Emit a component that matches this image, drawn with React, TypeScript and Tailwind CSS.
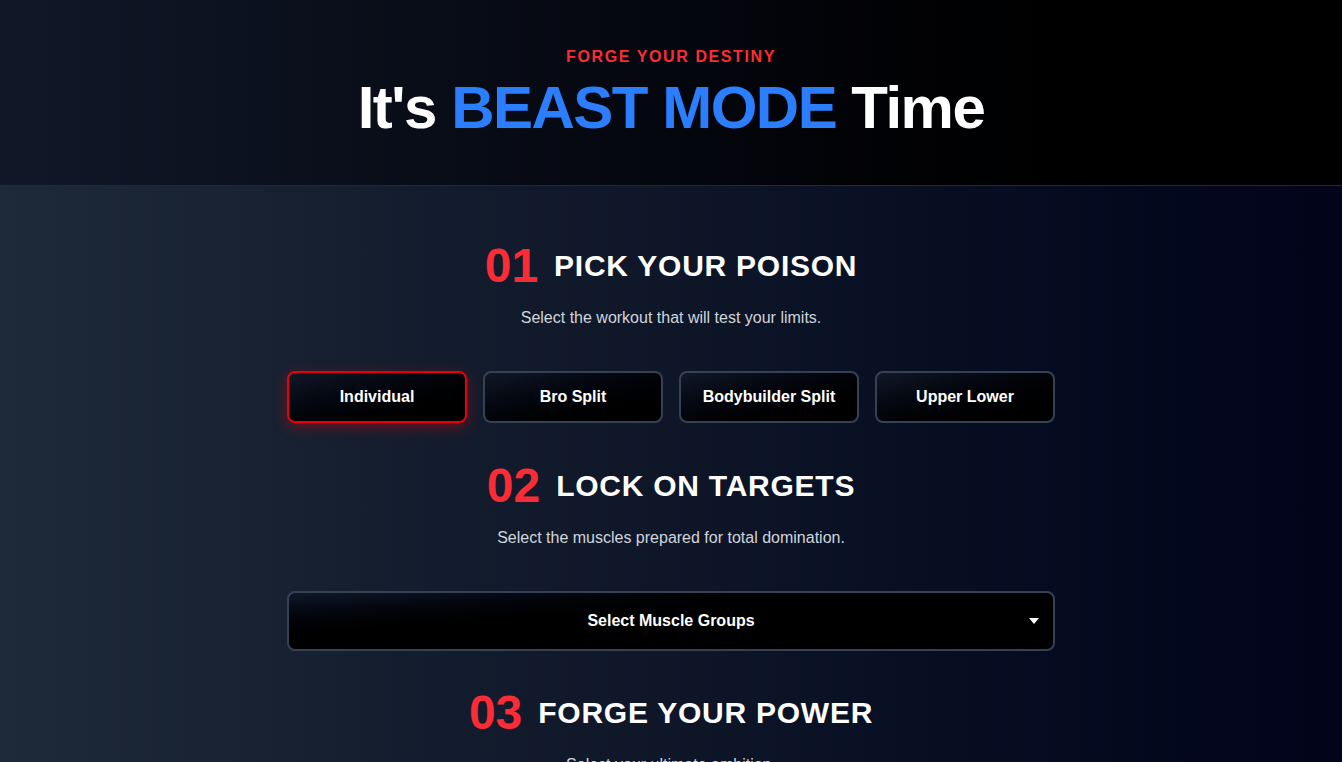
import React, { useState } from "react";

const font = { fontFamily: '"Liberation Sans", Arial, sans-serif' };

function SectionHeading({ num, title, sub }: { num: string; title: string; sub: string }) {
  return (
    <div className="flex flex-col items-center">
      <div className="flex items-center gap-4 h-12">
        <span className="text-[48px] leading-none font-bold text-red-500">{num}</span>
        <span className="text-[30px] leading-none font-bold text-white tracking-wide">{title}</span>
      </div>
      <p className="mt-[16px] text-base leading-6 text-gray-300">{sub}</p>
    </div>
  );
}

export default function App() {
  const [sel, setSel] = useState("Individual");
  const opts = ["Individual", "Bro Split", "Bodybuilder Split", "Upper Lower"];
  return (
    <div style={font} className="min-h-screen bg-black">
      <header className="h-[186px] bg-gradient-to-r from-gray-900 via-[#05070f] to-black border-b border-slate-800 flex flex-col items-center pt-[48px]">
        <div className="text-base font-bold tracking-[0.1em] text-red-500 leading-[18px]">FORGE YOUR DESTINY</div>
        <h1 className="mt-[6px] text-[60px] leading-[72px] font-bold text-white tracking-[-0.025em]">
          It's <span className="text-blue-500">BEAST MODE</span> Time
        </h1>
      </header>
      <main className="bg-gradient-to-r from-gray-800 via-[#0e1628] to-[#02041a] pt-[56px] pb-10 flex flex-col items-center">
        <div className="w-[768px] flex flex-col">
          <SectionHeading num="01" title="PICK YOUR POISON" sub="Select the workout that will test your limits." />
          <div className="mt-[41px] grid grid-cols-4 gap-4">
            {opts.map((o) => (
              <button
                key={o}
                onClick={() => setSel(o)}
                className={
                  "h-[52px] rounded-lg border-2 bg-gradient-to-br from-gray-900 to-black text-white font-bold text-base " +
                  (sel === o ? "border-red-600 shadow-[0_4px_14px_rgba(220,0,10,0.45)]" : "border-gray-700")
                }
              >
                {o}
              </button>
            ))}
          </div>
          <div className="mt-[39px]">
            <SectionHeading num="02" title="LOCK ON TARGETS" sub="Select the muscles prepared for total domination." />
          </div>
          <div className="mt-[41px] relative h-[60px] rounded-lg border-2 border-gray-700 bg-gradient-to-br from-gray-900 via-black to-black flex items-center justify-center">
            <span className="text-white font-bold text-base">Select Muscle Groups</span>
            <svg className="absolute right-[14px] top-1/2 -translate-y-1/2" width="10" height="6" viewBox="0 0 10 6">
              <path d="M0 0 L10 0 L5 6 Z" fill="white" />
            </svg>
          </div>
          <div className="mt-[38px]">
            <SectionHeading num="03" title="FORGE YOUR POWER" sub="Select your ultimate ambition." />
          </div>
        </div>
      </main>
    </div>
  );
}
